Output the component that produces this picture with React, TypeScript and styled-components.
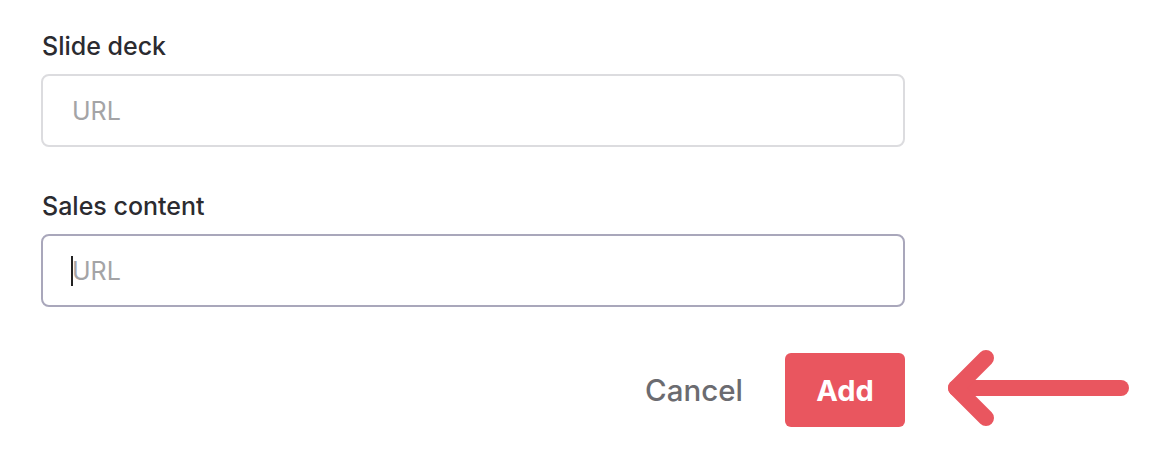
import React from 'react'
import styled, { createGlobalStyle } from 'styled-components'

const GlobalStyle = createGlobalStyle`
  body {
    margin: 0;
    background: #ffffff;
    font-family: Inter, "Noto Sans", sans-serif;
  }
`

const Form = styled.div`
  width: 864px;
  padding: 33px 0 0 41px;
  display: flex;
  flex-direction: column;
`

const Field = styled.div`
  display: flex;
  flex-direction: column;
  margin-bottom: 46px;
`

const Label = styled.label`
  font-size: 25px;
  font-weight: 550;
  color: #2b2b30;
  line-height: 26px;
  margin-bottom: 15px;
  padding-left: 1px;
`

const Input = styled.div<{ focused?: boolean }>`
  box-sizing: border-box;
  height: 73px;
  border: 2px solid ${p => (p.focused ? '#a9a7bb' : '#dcdcdf')};
  border-radius: 8px;
  display: flex;
  align-items: center;
  padding-left: 29px;
  font-size: 25px;
  color: #a4a4a6;
`

const Caret = styled.span`
  display: inline-block;
  width: 2px;
  height: 30px;
  background: #222;
  margin-right: -1px;
  margin-left: -1px;
`

const Footer = styled.div`
  display: flex;
  justify-content: flex-end;
  align-items: center;
  gap: 42px;
`

const CancelButton = styled.button`
  border: none;
  background: none;
  padding: 0;
  font-family: inherit;
  font-size: 29.5px;
  font-weight: 500;
  color: #6b6b70;
`

const AddWrap = styled.div`
  position: relative;
`

const AddButton = styled.button`
  width: 120px;
  height: 74px;
  border: none;
  border-radius: 6px;
  background: #e9565f;
  color: #ffffff;
  font-family: inherit;
  font-size: 29px;
  font-weight: 700;
`

const Pointer = styled.svg`
  position: absolute;
  left: 163px;
  top: -5px;
`

export default function App() {
  return (
    <>
      <GlobalStyle />
      <Form>
        <Field>
          <Label>Slide deck</Label>
          <Input>URL</Input>
        </Field>
        <Field>
          <Label>Sales content</Label>
          <Input focused>
            <Caret />
            URL
          </Input>
        </Field>
        <Footer>
          <CancelButton>Cancel</CancelButton>
          <AddWrap>
            <AddButton>Add</AddButton>
            <Pointer width="190" height="84" viewBox="0 0 190 84">
              <g
                stroke="#e9565f"
                strokeWidth="16"
                strokeLinecap="round"
                strokeLinejoin="round"
                fill="none"
              >
                <path d="M8 40 H173" />
                <path d="M38 10 L8 40 L38 70" />
              </g>
            </Pointer>
          </AddWrap>
        </Footer>
      </Form>
    </>
  )
}
